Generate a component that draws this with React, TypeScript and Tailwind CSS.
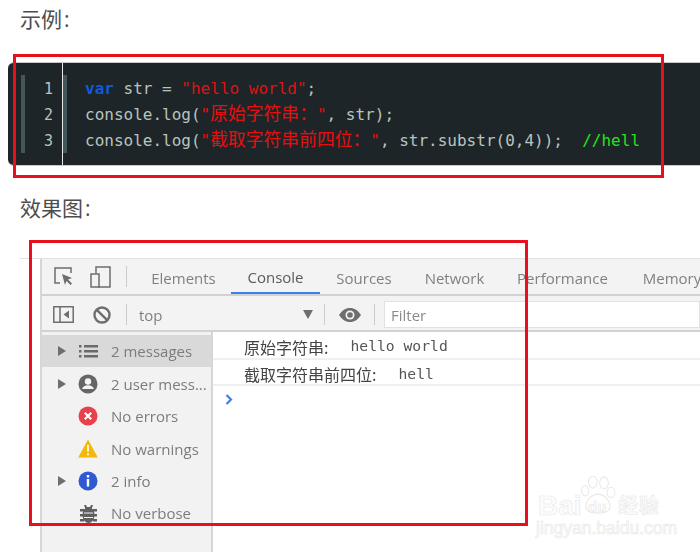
const sans = "font-['Open_Sans','Noto_Sans_CJK_SC',sans-serif]"

const tabs = [
  { label: 'Elements', width: 'w-[95px]' },
  { label: 'Console', width: 'w-[89px]', active: true },
  { label: 'Sources', width: 'w-[88px]' },
  { label: 'Network', width: 'w-[93px]' },
  { label: 'Performance', width: 'w-[123px]' },
  { label: 'Memory', width: 'w-[96px]' },
]

function Caret() {
  return (
    <svg width="8" height="10" viewBox="0 0 8 10" className="shrink-0">
      <path d="M0 0l8 5-8 5z" fill="#6e6e6e" />
    </svg>
  )
}

function ListIcon() {
  return (
    <svg width="19" height="13" viewBox="0 0 19 13" fill="#6a6a6a">
      <path d="M0 0h2.500v2.500H0zM5 0h14v2.500H5zM0 5h2.500v2.500H0zM5 5h14v2.500H5zM0 10h2.500v2.500H0zM5 10h14v2.500H5z" />
    </svg>
  )
}

function UserIcon() {
  return (
    <svg width="20" height="20" viewBox="0 0 20 20">
      <circle cx="10" cy="10" r="9.500" fill="#666" />
      <circle cx="10" cy="7.500" r="3.200" fill="#f3f3f3" />
      <path d="M4 15c1-3 3.500-3.800 6-3.800s5 .8 6 3.800z" fill="#f3f3f3" />
    </svg>
  )
}

function ErrorIcon() {
  return (
    <svg width="20" height="20" viewBox="0 0 20 20">
      <circle cx="10" cy="10" r="9.500" fill="#e8414b" />
      <path d="M6.800 6.800l6.400 6.400M13.200 6.800l-6.400 6.400" stroke="#fff" strokeWidth="2.200" />
    </svg>
  )
}

function WarningIcon() {
  return (
    <svg width="20" height="19" viewBox="0 0 20 19">
      <path d="M10 .5L19.800 18.500H.2z" fill="#f2b90c" />
      <path d="M10 6v6.500M10 14.200v2" stroke="#fff5d0" strokeWidth="2" />
    </svg>
  )
}

function InfoIcon() {
  return (
    <svg width="20" height="20" viewBox="0 0 20 20">
      <circle cx="10" cy="10" r="9.500" fill="#2f5bd0" />
      <path d="M10 4v2.400M10 8v7.500" stroke="#fff" strokeWidth="2.400" />
    </svg>
  )
}

function BugIcon() {
  return (
    <svg width="17" height="19" viewBox="0 0 17 19" fill="#5f5f5f">
      <ellipse cx="8.500" cy="11" rx="6" ry="8" />
      <path d="M4 1h2l1 2h3l1-2h2l-1.500 4h-6zM0 5h4v2.500H0zM13 5h4v2.500h-4zM0 10h4v2.500H0zM13 10h4v2.500h-4zM0 15h4v2.500H0zM13 15h4v2.500h-4z" />
      <path d="M4 9h9M4 13.500h9" stroke="#f3f3f3" strokeWidth="1" />
    </svg>
  )
}

const filters = [
  { label: '2 messages', icon: <ListIcon />, caret: true, selected: true },
  { label: '2 user mess...', icon: <UserIcon />, caret: true },
  { label: 'No errors', icon: <ErrorIcon /> },
  { label: 'No warnings', icon: <WarningIcon /> },
  { label: '2 info', icon: <InfoIcon />, caret: true },
  { label: 'No verbose', icon: <BugIcon /> },
]

function Devtools() {
  return (
    <div className={`flex-1 flex flex-col min-h-0 ml-5 border-t border-[#dfe1e7] pl-5 blur-[0.35px] ${sans}`}>
      <div className="flex-1 flex flex-col min-h-0 border-l-2 border-[#d6d6d6] text-[#777]">
        {/* Tabs */}
        <div className="h-[37px] shrink-0 flex items-center bg-[#f3f3f3] border-b-2 border-[#d2d2d2] overflow-hidden">
          <svg width="19" height="20" viewBox="0 0 19 20" fill="none" className="ml-[12px] shrink-0">
            <path d="M6 16H1V1h16v5" stroke="#6e6e6e" strokeWidth="1.500" />
            <path d="M8 7l10 4-4 1.500 4 4-1.500 1.500-4-4L11 18z" fill="#6e6e6e" />
          </svg>
          <svg width="21" height="22" viewBox="0 0 21 22" fill="none" className="ml-[17px] shrink-0">
            <path d="M6 7V1h14v20H8" stroke="#6e6e6e" strokeWidth="1.500" />
            <path d="M1 8h8v13H1z" stroke="#6e6e6e" strokeWidth="1.500" />
          </svg>
          <div className="ml-[15px] w-[1px] h-[21px] bg-[#ccc] shrink-0" />
          <div className="ml-[9px] flex shrink-0 h-full">
            {tabs.map((tab) => (
              <div
                key={tab.label}
                className={`${tab.width} shrink-0 flex items-center justify-center pt-[3px] text-[15px] whitespace-nowrap ${
                  tab.active ? 'border-b-2 border-[#3b82e8] text-[#5a5a5a]' : 'text-[#808080]'
                }`}
              >
                {tab.label}
              </div>
            ))}
          </div>
        </div>

        {/* Console toolbar */}
        <div className="h-[36px] shrink-0 flex items-center pt-[3px] bg-[#f3f3f3] border-b-2 border-[#d2d2d2]">
          <svg width="21" height="17" viewBox="0 0 21 17" fill="none" className="ml-[11px] shrink-0">
            <path d="M.8.8h19.400v15.400H.8zM7 1v15" stroke="#6e6e6e" strokeWidth="1.500" />
            <path d="M16 4.500v8L10.500 8.500z" fill="#6e6e6e" />
          </svg>
          <svg width="18" height="18" viewBox="0 0 18 18" fill="none" className="ml-[19px] shrink-0">
            <circle cx="9" cy="9" r="7.500" stroke="#6e6e6e" strokeWidth="2.400" />
            <path d="M3.800 3.800l10.400 10.400" stroke="#6e6e6e" strokeWidth="2.400" />
          </svg>
          <div className="ml-[15px] w-[1px] h-[21px] bg-[#ccc] shrink-0" />
          <span className="ml-[12px] pt-[1px] w-[164px] text-[15px] text-[#808080] shrink-0">top</span>
          <svg width="10" height="9" viewBox="0 0 10 9" className="shrink-0">
            <path d="M0 0h10L5 9z" fill="#6e6e6e" />
          </svg>
          <div className="ml-[11px] w-[1px] h-[21px] bg-[#ccc] shrink-0" />
          <svg width="22" height="14" viewBox="0 0 22 14" className="ml-[14px] shrink-0">
            <path d="M0 7c3-4.500 6.500-7 11-7s8 2.500 11 7c-3 4.500-6.500 7-11 7S3 11.500 0 7z" fill="#6e6e6e" />
            <circle cx="11" cy="7" r="4.500" fill="#f3f3f3" />
            <circle cx="11" cy="7" r="2.800" fill="#6e6e6e" />
          </svg>
          <div className="ml-[13px] w-[1px] h-[21px] bg-[#ccc] shrink-0" />
          <div className="ml-[9px] flex-1 h-[27px] bg-white border border-[#e2e2e2] flex items-center pl-[6px] pt-[1px] text-[15px] text-[#8a8a8a]">
            Filter
          </div>
        </div>

        <div className="flex-1 flex min-h-0">
          {/* Sidebar */}
          <div className="w-[171px] shrink-0 bg-[#f2f2f2] border-r-2 border-[#d6d6d6] pt-[3px]">
            {filters.map((f) => (
              <div
                key={f.label}
                className={`h-[32.4px] flex items-center text-[15px] whitespace-nowrap ${
                  f.selected ? 'bg-[#d9d9d9]' : ''
                }`}
              >
                <div className="w-[16px] shrink-0" />
                <div className="w-[20px] shrink-0 flex">{f.caret && <Caret />}</div>
                <div className="w-[20px] shrink-0 flex justify-center">{f.icon}</div>
                <span className="ml-[13px] pt-[1px] text-[#7c7c7c]">{f.label}</span>
              </div>
            ))}
          </div>

          {/* Messages */}
          <div className="flex-1 bg-white flex flex-col text-[#444]">
            <div className="h-[28px] shrink-0 flex items-center pl-[31px] pt-[3px] border-b-2 border-[#f0f0f0]">
              <span className="text-[16px] font-['Noto_Sans_CJK_SC',sans-serif]">原始字符串:</span>
              <span className="ml-[22px] font-['DejaVu_Sans_Mono',monospace] text-[14.7px] text-[#555]">hello world</span>
            </div>
            <div className="h-[26px] shrink-0 flex items-center pl-[31px] pt-[4px] border-b-2 border-[#f0f0f0]">
              <span className="text-[16px] font-['Noto_Sans_CJK_SC',sans-serif]">截取字符串前四位:</span>
              <span className="ml-[22px] font-['DejaVu_Sans_Mono',monospace] text-[14.7px] text-[#555]">hell</span>
            </div>
            <div className="pl-[12px] pt-[8px]">
              <svg width="8" height="11" viewBox="0 0 8 11" fill="none">
                <path d="M1.500 1l4.500 4.500L1.500 10" stroke="#3b82e8" strokeWidth="2.200" />
              </svg>
            </div>
          </div>
        </div>
      </div>
    </div>
  )
}

function Watermark() {
  return (
    <div className="absolute left-[536px] top-[475px] w-[130px] h-[60px] text-[#fcfcfc] [-webkit-text-stroke:0.6px_#e8e8e8] font-['Liberation_Sans',sans-serif]">
      <svg width="36" height="38" viewBox="0 0 40 44" fill="#fff" stroke="#e8e8e8" strokeWidth="1.200" className="absolute left-[44px] top-[1px]">
        <ellipse cx="5" cy="17" rx="4" ry="6" />
        <ellipse cx="14" cy="7" rx="5" ry="7" />
        <ellipse cx="27" cy="8" rx="5" ry="7" />
        <ellipse cx="35" cy="19" rx="4.500" ry="6" />
        <path d="M6 36c0-9 8-15 14-15s14 6 14 15c0 6-6 7-14 7S6 42 6 36z" />
      </svg>
      <span className="absolute left-[2px] top-[15px] text-[28px] leading-[32px] font-bold">Bai</span>
      <span className="absolute left-[52px] top-[23px] text-[15px] leading-[18px] font-bold">du</span>
      <span className="absolute left-[82px] top-[17px] text-[20px] leading-[26px] tracking-[1px] font-bold whitespace-nowrap font-['Noto_Sans_CJK_SC',sans-serif]">经验</span>
      <span className="absolute left-0 top-[44px] text-[17.5px] leading-[18px] whitespace-nowrap">jingyan.baidu.com</span>
    </div>
  )
}

export default function App() {
  const cjk = "text-[17.8px] leading-none font-['Noto_Sans_CJK_SC',sans-serif]"
  return (
    <div className={`relative w-[700px] h-[552px] overflow-hidden bg-white flex flex-col ${sans}`}>
      <div className="h-[62px] shrink-0 pl-5 pt-[4px] text-[21px] leading-[30px] text-[#4d4d4d]">示例<span className="ml-[2px]">:</span></div>

      {/* Code block */}
      <div className="h-[104px] shrink-0 ml-2 bg-[#1e2529] rounded-l-md border-y border-[#c9c9c9] flex">
        <div className="w-[55px] shrink-0 border-r border-[#e8e8e8] flex py-3">
          <div className="ml-[13px] w-1 bg-[#43565a]" />
          <div className="ml-[19px] pt-[1px] flex flex-col font-['DejaVu_Sans_Mono',monospace] text-[15px] leading-[26px] text-[#b9c4bd]">
            <span>1</span>
            <span>2</span>
            <span>3</span>
          </div>
        </div>
        <div className="w-1 my-3 bg-[#43565a] shrink-0" />
        <div className="pl-[18px] pt-[13px] font-['DejaVu_Sans_Mono',monospace] text-[16px] leading-[26px] text-[#b9c4bd] whitespace-pre">
          <div className="h-[26px]">
            <span className="text-[#0f5bd6] font-bold">var</span> str = <span className="text-[#dc1414]">"hello world"</span>;
          </div>
          <div className="h-[26px]">
            console.log(<span className="text-[#e60f0f]">"<span className={cjk}>原始字符串：</span>"</span>, str);
          </div>
          <div className="h-[26px]">
            console.log(<span className="text-[#e60f0f]">"<span className={cjk}>截取字符串前四位：</span>"</span>, str.substr(0,4));  <span className="text-[#1ee61e]">//hell</span>
          </div>
        </div>
      </div>

      <div className="h-[92px] shrink-0 pl-5 pt-[27px] text-[21px] leading-[30px] text-[#4d4d4d]">效果图<span className="ml-[2px]">:</span></div>

      <Devtools />

      {/* Red annotation boxes */}
      <div className="absolute left-[13px] top-[54px] w-[651px] h-[124px] border-[3px] border-[#e8101c]" />
      <div className="absolute left-[29px] top-[240px] w-[499px] h-[286px] border-[3px] border-[#e8101c]" />

      <Watermark />
    </div>
  )
}
